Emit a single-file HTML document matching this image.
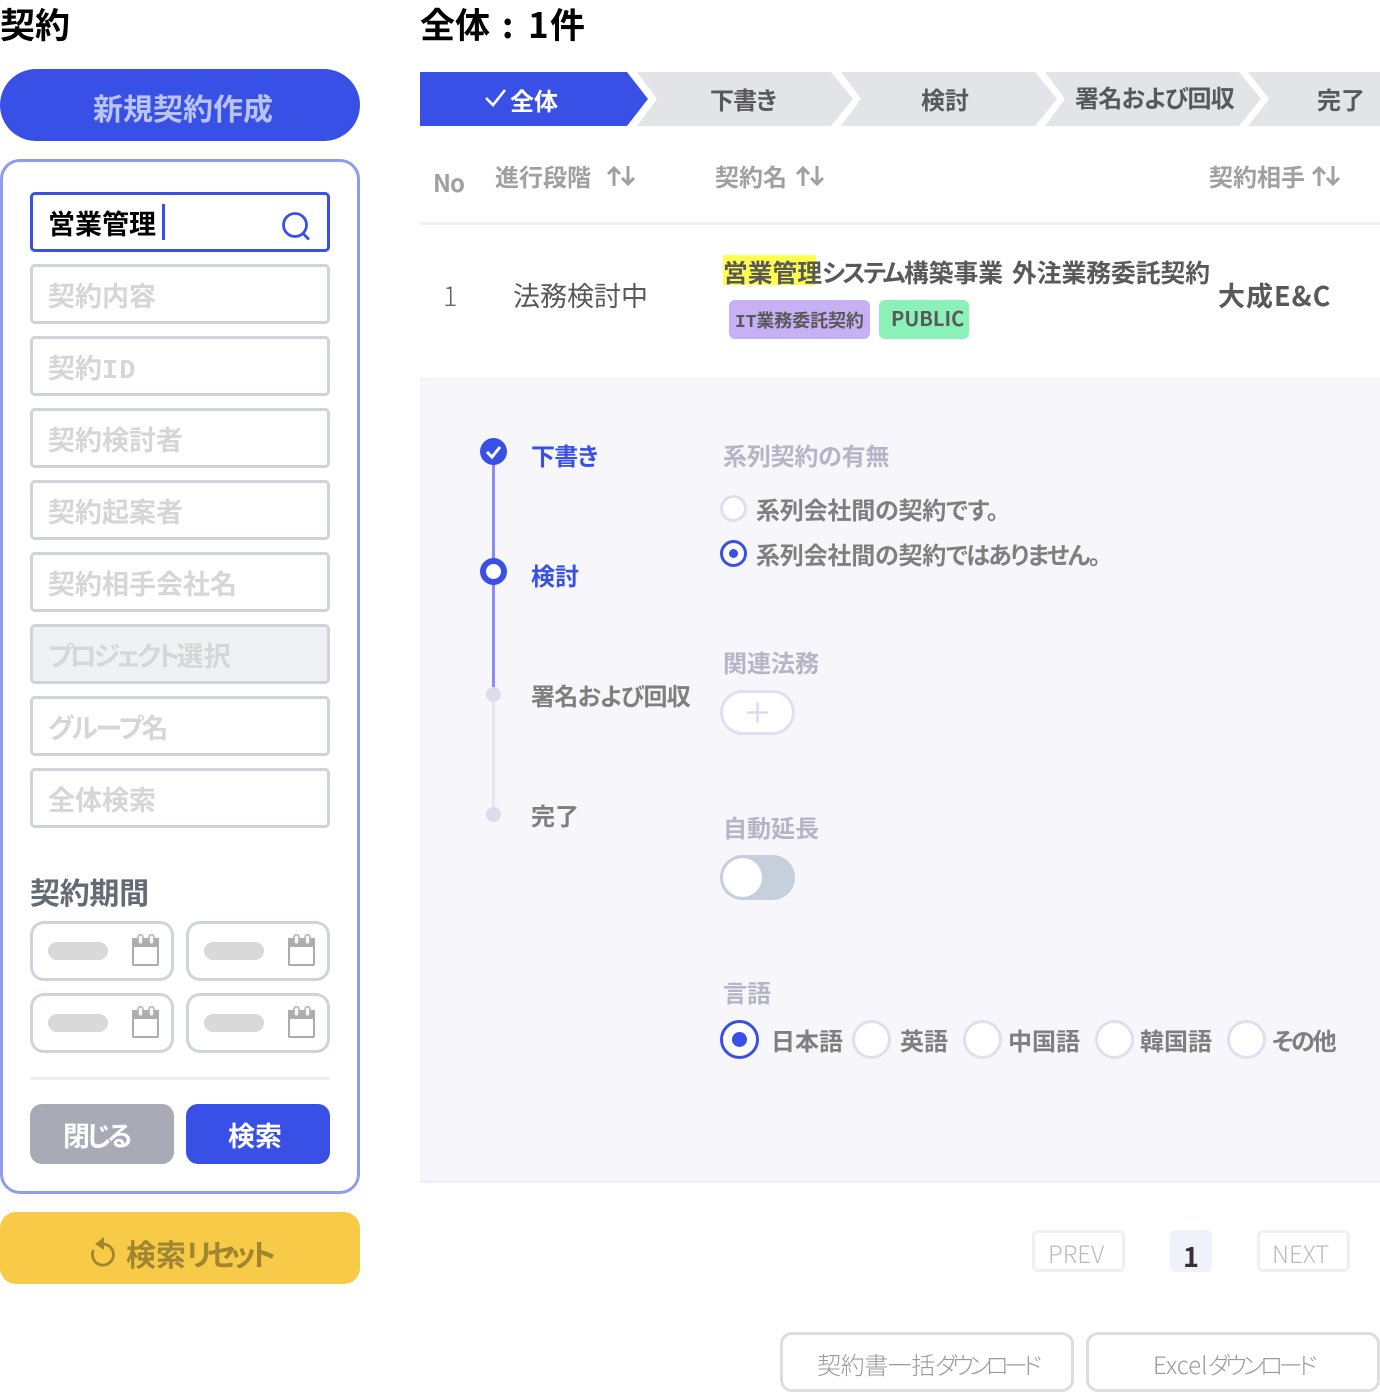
<!DOCTYPE html>
<html lang="ja"><head><meta charset="utf-8">
<style>
html,body{margin:0;padding:0;background:#fff}
body{position:relative;width:1380px;height:1392px;overflow:hidden;font-family:"Noto Sans CJK JP","Liberation Sans",sans-serif;font-feature-settings:"palt";}
.t{position:absolute;white-space:nowrap;line-height:40px;font-weight:700;margin-top:-1px}
.b{position:absolute;box-sizing:border-box}
.in{position:absolute;box-sizing:border-box;left:30px;width:300px;height:60px;border:3px solid #d1d3db;border-radius:5px;background:#fff}
.ph{font-size:27px;color:#d6d6d6;left:48px}
.d{position:absolute;box-sizing:border-box;width:144px;height:60px;border:3px solid #d1d3db;border-radius:14px;background:#fff}
.d i{position:absolute;left:15px;top:18px;width:60px;height:18px;border-radius:9px;background:#d9d9d9}
.d svg{position:absolute;left:99px;top:10px}
.gr{font-size:24px;color:#595959}
.hd{font-size:24px;color:#a0a0a0}
.lb{font-size:24px;color:#b4b5c6}
.lv{font-size:24px;color:#7f7f7f}
.m{font-family:"Liberation Mono",monospace;font-weight:700}
.r{position:absolute;box-sizing:border-box;border-radius:50%;background:#fff;border:3px solid #dfdfee}
svg{position:absolute;overflow:visible}
</style></head><body>

<div class="t" style="left:0;top:5px;font-size:35px;color:#000">契約</div>
<div class="b" style="left:0;top:69px;width:360px;height:72px;border-radius:36px;background:#3850e6"></div>
<div class="t" style="left:93px;top:88px;font-size:30px;color:#b9c3f5">新規契約作成</div>

<div class="b" style="left:0;top:159px;width:360px;height:1035px;border:3px solid #8e9cf0;border-radius:20px;background:#fff"></div>

<div class="in" style="top:192px;border-color:#3850e6"></div>
<div class="t" style="left:48px;top:204px;font-size:27px;color:#000">営業管理</div>
<div class="b" style="left:162px;top:204px;width:3px;height:36px;background:#3850e6"></div>
<svg style="left:280px;top:211px" width="32" height="30" viewBox="0 0 32 30" fill="none" stroke="#3850e6" stroke-width="2.8"><circle cx="15" cy="14" r="11.5"/><path d="M23 22.500l6 6"/></svg>

<div class="in" style="top:264px"></div><div class="t ph" style="top:276px">契約内容</div>
<div class="in" style="top:336px"></div><div class="t ph" style="top:348px">契約<span class="m" style="letter-spacing:1px">ID</span></div>
<div class="in" style="top:408px"></div><div class="t ph" style="top:420px">契約検討者</div>
<div class="in" style="top:480px"></div><div class="t ph" style="top:492px">契約起案者</div>
<div class="in" style="top:552px"></div><div class="t ph" style="top:564px">契約相手会社名</div>
<div class="in" style="top:624px;background:#eff1f5"></div><div class="t ph" style="top:636px"><span style="letter-spacing:-3.500px">プロジェクト</span>選択</div>
<div class="in" style="top:696px"></div><div class="t ph" style="top:708px"><span style="letter-spacing:-2px">グループ</span>名</div>
<div class="in" style="top:768px"></div><div class="t ph" style="top:780px">全体検索</div>

<div class="t" style="left:30px;top:872px;font-size:30px;color:#666a75;letter-spacing:-.3px">契約期間</div>

<div class="d" style="left:30px;top:921px"><i></i><svg width="27" height="32" viewBox="0 0 27 32"><rect x="1" y="6" width="25" height="25" rx="1" fill="#fff" stroke="#adadad" stroke-width="2"/><path d="M0 4h27v9H0z" fill="#adadad"/><rect x="6" y="0.700" width="5" height="9.500" rx="2.500" fill="#f4f4f4" stroke="#adadad" stroke-width="1.400"/><rect x="17" y="0.700" width="5" height="9.500" rx="2.500" fill="#f4f4f4" stroke="#adadad" stroke-width="1.400"/></svg></div>
<div class="d" style="left:186px;top:921px"><i></i><svg width="27" height="32" viewBox="0 0 27 32"><rect x="1" y="6" width="25" height="25" rx="1" fill="#fff" stroke="#adadad" stroke-width="2"/><path d="M0 4h27v9H0z" fill="#adadad"/><rect x="6" y="0.700" width="5" height="9.500" rx="2.500" fill="#f4f4f4" stroke="#adadad" stroke-width="1.400"/><rect x="17" y="0.700" width="5" height="9.500" rx="2.500" fill="#f4f4f4" stroke="#adadad" stroke-width="1.400"/></svg></div>
<div class="d" style="left:30px;top:993px"><i></i><svg width="27" height="32" viewBox="0 0 27 32"><rect x="1" y="6" width="25" height="25" rx="1" fill="#fff" stroke="#adadad" stroke-width="2"/><path d="M0 4h27v9H0z" fill="#adadad"/><rect x="6" y="0.700" width="5" height="9.500" rx="2.500" fill="#f4f4f4" stroke="#adadad" stroke-width="1.400"/><rect x="17" y="0.700" width="5" height="9.500" rx="2.500" fill="#f4f4f4" stroke="#adadad" stroke-width="1.400"/></svg></div>
<div class="d" style="left:186px;top:993px"><i></i><svg width="27" height="32" viewBox="0 0 27 32"><rect x="1" y="6" width="25" height="25" rx="1" fill="#fff" stroke="#adadad" stroke-width="2"/><path d="M0 4h27v9H0z" fill="#adadad"/><rect x="6" y="0.700" width="5" height="9.500" rx="2.500" fill="#f4f4f4" stroke="#adadad" stroke-width="1.400"/><rect x="17" y="0.700" width="5" height="9.500" rx="2.500" fill="#f4f4f4" stroke="#adadad" stroke-width="1.400"/></svg></div>

<div class="b" style="left:30px;top:1077px;width:300px;height:3px;background:#eee"></div>
<div class="b" style="left:30px;top:1104px;width:144px;height:60px;border-radius:12px;background:#a8aab5"></div>
<div class="t" style="left:63px;top:1116px;font-size:27px;color:#fff;letter-spacing:-3.600px">閉じる</div>
<div class="b" style="left:186px;top:1104px;width:144px;height:60px;border-radius:12px;background:#3850e6"></div>
<div class="t" style="left:228px;top:1116px;font-size:27px;color:#fff">検索</div>

<div class="b" style="left:0;top:1212px;width:360px;height:72px;border-radius:16px;background:#f7cb47"></div>
<svg style="left:90px;top:1236px" width="28" height="30" viewBox="0 0 28 30" fill="none"><path d="M10 8.500a10.500 10.500 0 1 1-6.500 5.500" stroke="#a18530" stroke-width="2.800"/><path d="M14 1v13L5 8z" fill="#a18530"/></svg>
<div class="t" style="left:126px;top:1234px;font-size:30px;color:#a18530">検索<span style="letter-spacing:-5px">リセット</span></div>

<div class="t" style="left:420px;top:5px;font-size:35px;color:#000">全体</div>
<div class="t" style="left:502px;top:5px;font-size:35px;color:#000">:</div>
<div class="t" style="left:528px;top:5px;font-size:35px;color:#000">1</div>
<div class="t" style="left:550px;top:5px;font-size:35px;color:#000">件</div>

<svg style="left:420px;top:72px" width="960" height="54" viewBox="0 0 960 54">
<path d="M0 0H207L228 27 207 54H0z" fill="#3850e6"/>
<path d="M217 0H411L433 27 411 54H217L237 27z" fill="#e3e4e8"/>
<path d="M421 0H615L637 27 615 54H421L441 27z" fill="#e3e4e8"/>
<path d="M625 0H819L841 27 819 54H625L645 27z" fill="#e3e4e8"/>
<path d="M828 0H960V54H828L849 27z" fill="#e3e4e8"/>
<path d="M66 26l7 7 12-15" fill="none" stroke="#fff" stroke-width="2.600"/>
</svg>
<div class="t" style="left:510px;top:81px;font-size:24px;color:#fff">全体</div>
<div class="t gr" style="left:710px;top:80px;letter-spacing:-.9px">下書き</div>
<div class="t gr" style="left:921px;top:80px">検討</div>
<div class="t gr" style="left:1075px;top:78px;letter-spacing:-.7px">署名および回収</div>
<div class="t gr" style="left:1317px;top:80px">完了</div>

<div class="t hd" style="left:433px;top:163px;letter-spacing:-1px">No</div>
<div class="t hd" style="left:495px;top:157px">進行段階</div>
<svg style="left:607px;top:165px" width="29" height="22" viewBox="0 0 29 22" fill="none" stroke="#a0a0a0" stroke-width="3"><path d="M7 21V3M1 9l6-6 6 6M21 1v18M15 13l6 6 6-6"/></svg>
<div class="t hd" style="left:715px;top:157px">契約名</div>
<svg style="left:796px;top:165px" width="29" height="22" viewBox="0 0 29 22" fill="none" stroke="#a0a0a0" stroke-width="3"><path d="M7 21V3M1 9l6-6 6 6M21 1v18M15 13l6 6 6-6"/></svg>
<div class="t hd" style="left:1209px;top:157px">契約相手</div>
<svg style="left:1312px;top:165px" width="29" height="22" viewBox="0 0 29 22" fill="none" stroke="#a0a0a0" stroke-width="3"><path d="M7 21V3M1 9l6-6 6 6M21 1v18M15 13l6 6 6-6"/></svg>

<div class="b" style="left:420px;top:222px;width:960px;height:3px;background:#f0f0f0"></div>

<div class="t" style="left:443px;top:276px;font-size:27px;font-weight:300;color:#666">1</div>
<div class="t" style="left:513px;top:276px;font-size:27px;font-weight:400;color:#595959">法務検討中</div>

<div class="b" style="left:723px;top:255px;width:93px;height:30px;background:#ffff4d"></div>
<div class="t" style="left:723px;top:253px;font-size:24.750px;color:#595959">営業管理</div>
<div class="t" style="left:822px;top:253px;font-size:24.750px;color:#595959;letter-spacing:-2.500px">システム</div>
<div class="t" style="left:904px;top:253px;font-size:24.750px;color:#595959">構築事業</div>
<div class="t" style="left:1012px;top:253px;font-size:24.750px;color:#595959">外注業務委託契約</div>
<div class="b" style="left:729px;top:300px;width:141px;height:39px;border-radius:6px;background:#c8b0f5"></div>
<div class="t" style="left:735px;top:301px;font-size:18px;color:#595959;letter-spacing:-.1px"><span class="m">IT</span>業務委託契約</div>
<div class="b" style="left:879px;top:300px;width:90px;height:39px;border-radius:6px;background:#8af2b8"></div>
<div class="t" style="left:891px;top:299px;font-size:20px;color:#595959">PUBLIC</div>
<div class="t" style="left:1218px;top:276px;font-size:27px;color:#595959;letter-spacing:1px">大成E&amp;C</div>

<div class="b" style="left:420px;top:378px;width:960px;height:805px;background:#f6f6fb;border-bottom:3px solid #f0f0f0;border-top:2px solid #f1f1fa"></div>

<div class="b" style="left:492px;top:451px;width:3px;height:243px;background:#8a8cf0"></div>
<div class="b" style="left:492px;top:694px;width:3px;height:120px;background:#e6e6f2"></div>
<svg style="left:480px;top:438px" width="27" height="27" viewBox="0 0 27 27"><circle cx="13.500" cy="13.500" r="13.500" fill="#3850e6"/><path d="M7 14l5 5 8-10" fill="none" stroke="#fff" stroke-width="3"/></svg>
<div class="b" style="left:480px;top:558px;width:27px;height:27px;border-radius:50%;background:#fff;border:6px solid #3850e6"></div>
<div class="b" style="left:486px;top:687px;width:15px;height:15px;border-radius:50%;background:#dddcec"></div>
<div class="b" style="left:486px;top:807px;width:15px;height:15px;border-radius:50%;background:#dddcec"></div>
<div class="t" style="left:531px;top:436px;font-size:24px;color:#3850e6;letter-spacing:-.7px">下書き</div>
<div class="t" style="left:531px;top:556px;font-size:24px;color:#3850e6">検討</div>
<div class="t lv" style="left:531px;top:676px;letter-spacing:-.7px">署名および回収</div>
<div class="t lv" style="left:531px;top:796px">完了</div>

<div class="t lb" style="left:723px;top:436px;letter-spacing:-.2px">系列契約の有無</div>
<div class="r" style="left:720px;top:495px;width:27px;height:27px"></div>
<div class="t lv" style="left:756px;top:490px;letter-spacing:-.2px">系列会社間の契約です。</div>
<div class="r" style="left:720px;top:540px;width:27px;height:27px;border-color:#3850e6"></div>
<div class="b" style="left:729px;top:549px;width:9px;height:9px;border-radius:50%;background:#3850e6"></div>
<div class="t lv" style="left:756px;top:535px"><span style="letter-spacing:-.2px">系列会社間の契約</span><span style="letter-spacing:-1.600px">ではありません。</span></div>

<div class="t lb" style="left:723px;top:643px">関連法務</div>
<div class="b" style="left:720px;top:690px;width:75px;height:45px;border-radius:23px;background:#fff;border:3px solid #e0e0f0"></div>
<svg style="left:747px;top:702px" width="21" height="21" viewBox="0 0 21 21"><path d="M10.500 0v21M0 10.500h21" stroke="#dddced" stroke-width="2.400"/></svg>

<div class="t lb" style="left:723px;top:808px">自動延長</div>
<div class="b" style="left:720px;top:855px;width:75px;height:45px;border-radius:23px;background:#c5d0dc"></div>
<div class="b" style="left:723px;top:858px;width:39px;height:39px;border-radius:50%;background:#fff"></div>

<div class="t lb" style="left:723px;top:973px">言語</div>
<div class="r" style="left:720px;top:1020px;width:39px;height:39px;border-color:#3850e6"></div>
<div class="b" style="left:732px;top:1032px;width:15px;height:15px;border-radius:50%;background:#3850e6"></div>
<div class="t lv" style="left:771px;top:1021px">日本語</div>
<div class="r" style="left:852px;top:1020px;width:39px;height:39px"></div>
<div class="t lv" style="left:900px;top:1021px">英語</div>
<div class="r" style="left:963px;top:1020px;width:39px;height:39px"></div>
<div class="t lv" style="left:1008px;top:1021px">中国語</div>
<div class="r" style="left:1095px;top:1020px;width:39px;height:39px"></div>
<div class="t lv" style="left:1140px;top:1021px">韓国語</div>
<div class="r" style="left:1227px;top:1020px;width:39px;height:39px"></div>
<div class="t lv" style="left:1272px;top:1021px;letter-spacing:-2.200px">その他</div>

<div class="b" style="left:1032px;top:1230px;width:93px;height:42px;border:3px solid #f0f0f0;border-radius:6px"></div>
<div class="t" style="left:1048px;top:1234px;font-size:24px;font-weight:300;color:#bbb">PREV</div>
<div class="b" style="left:1170px;top:1230px;width:42px;height:42px;border-radius:6px;background:#eff2fb"></div>
<div class="t" style="left:1183px;top:1237px;font-size:27px;color:#333">1</div>
<div class="b" style="left:1257px;top:1230px;width:93px;height:42px;border:3px solid #f0f0f0;border-radius:6px"></div>
<div class="t" style="left:1272px;top:1234px;font-size:24px;font-weight:300;color:#bbb">NEXT</div>

<div class="b" style="left:780px;top:1332px;width:294px;height:60px;border:3px solid #ddd;border-radius:12px"></div>
<div class="t" style="left:817px;top:1345px;font-size:24px;font-weight:300;color:#9a9a9a"><span style="letter-spacing:-.4px">契約書一括</span><span style="letter-spacing:-4.800px">ダウンロード</span></div>
<div class="b" style="left:1086px;top:1332px;width:294px;height:60px;border:3px solid #ddd;border-radius:12px"></div>
<div class="t" style="left:1153px;top:1345px;font-size:24px;font-weight:300;color:#9a9a9a">Excel<span style="letter-spacing:-4.200px">ダウンロード</span></div>

</body></html>
